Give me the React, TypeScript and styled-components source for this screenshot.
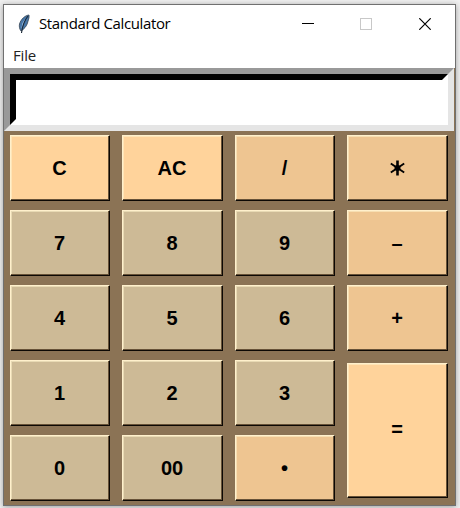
import React from "react";
import styled, { createGlobalStyle } from "styled-components";

const GlobalStyle = createGlobalStyle`
  html, body { margin: 0; padding: 0; }
  body { background: #f0f0f0; overflow: hidden; }
`;

const Desktop = styled.main`
  box-sizing: border-box;
  width: 460px;
  height: 508px;
  padding: 4px 4px 2px 3px;
  background: #f0f0f0;
`;

const Window = styled.section`
  box-sizing: border-box;
  width: 453px;
  height: 502px;
  border: 1px solid #707070;
  background: #8b7355;
  box-shadow: 0 1px 6px rgba(0, 0, 0, 0.35);
  display: flex;
  flex-direction: column;
`;

const TitleBar = styled.header`
  box-sizing: border-box;
  height: 38px;
  flex: none;
  display: flex;
  align-items: center;
  background: #fff;
  padding: 0 1px 0 14px;
`;

const Title = styled.h1`
  margin: 0 auto 0 9px;
  padding-bottom: 2px;
  font: 400 15px/20px "Open Sans", "Noto Sans", sans-serif;
  letter-spacing: -0.37px;
  color: #000;
  white-space: nowrap;
`;

const WindowButton = styled.button<{ $faded?: boolean }>`
  width: 58.5px;
  height: 38px;
  padding: 0;
  border: 0;
  background: none;
  display: flex;
  align-items: center;
  justify-content: center;
  color: ${(p) => (p.$faded ? "#c8c8c8" : "#000")};
`;

const MenuBar = styled.nav`
  height: 25px;
  flex: none;
  background: #fff;
  padding-left: 9px;
  font: 400 15px/25px "Open Sans", "Noto Sans", sans-serif;
  letter-spacing: -0.2px;
  color: #222;
`;

const EntryFrame = styled.div`
  box-sizing: border-box;
  width: 450px;
  height: 63px;
  flex: none;
  border: 6px solid;
  border-color: #999 #e5e5e5 #e5e5e5 #999;
`;

const Entry = styled.div`
  box-sizing: border-box;
  height: 100%;
  border: 6px solid;
  border-color: #000 #fff #fff #000;
  background: #fff;
`;

const Keypad = styled.div`
  display: grid;
  grid-template-columns: 112px 113px 112px 101px;
  grid-template-rows: repeat(5, 66px);
  row-gap: 9px;
  padding: 4px 0 0 6px;
`;

type Tone = "clear" | "operator" | "digit";

const fills: Record<Tone, string> = {
  clear: "#ffd39b",
  operator: "#eec591",
  digit: "#cdba96",
};

const Key = styled.button<{ $tone: Tone; $wide?: boolean; $tall?: boolean }>`
  box-sizing: border-box;
  width: ${(p) => (p.$wide ? "101px" : "100px")};
  display: flex;
  align-items: center;
  justify-content: center;
  grid-row: ${(p) => (p.$tall ? "span 2" : "auto")};
  margin: ${(p) => (p.$tall ? "3px 0" : "0")};
  padding: ${(p) => (p.$tall ? "0 1px 4px 0" : "0 1px 1px 0")};
  border: 1px solid;
  border-color: #fff0cc #0c0804 #0c0804 #fff0cc;
  border-radius: 0;
  background: ${(p) => fills[p.$tone]};
  box-shadow: inset -1px -1px #675238, inset 1px 1px rgba(255, 244, 205, 0.55);
  color: #000;
  font: 700 20px/24px "Liberation Sans", Arial, sans-serif;
`;

const keys: { label: string; tone: Tone; wide?: boolean; tall?: boolean }[] = [
  { label: "C", tone: "clear" },
  { label: "AC", tone: "clear", wide: true },
  { label: "/", tone: "operator" },
  { label: "*", tone: "operator", wide: true },
  { label: "7", tone: "digit" },
  { label: "8", tone: "digit", wide: true },
  { label: "9", tone: "digit" },
  { label: "–", tone: "operator", wide: true },
  { label: "4", tone: "digit" },
  { label: "5", tone: "digit", wide: true },
  { label: "6", tone: "digit" },
  { label: "+", tone: "operator", wide: true },
  { label: "1", tone: "digit" },
  { label: "2", tone: "digit", wide: true },
  { label: "3", tone: "digit" },
  { label: "=", tone: "clear", wide: true, tall: true },
  { label: "0", tone: "digit" },
  { label: "00", tone: "digit", wide: true },
  { label: "•", tone: "operator" },
];

const Feather = () => (
  <svg width="12" height="20" viewBox="0 0 12 20">
    <path d="M11 1C7 1.5 3 5 1.5 10C1 12.500 1.500 15 3 17C6 15 8.500 12.500 9.500 9C10 6.500 11.500 4 11 1Z" fill="#4776a8" stroke="#344352" strokeWidth=".8" />
    <path d="M8 4L5 10L3 16L4.500 9Z" fill="#a8c9e8" />
    <path d="M10 2Q5 8 3.500 19" fill="none" stroke="#182634" strokeWidth="1.100" />
  </svg>
);

const Asterisk = () => (
  <svg width="15" height="16" viewBox="0 0 15 16" role="img" aria-label="*">
    <path d="M7.500 0.500V15.500" stroke="#000" strokeWidth="2.600" />
    <path d="M.8 3.500L14.200 12.500M14.200 3.500L.8 12.500" stroke="#000" strokeWidth="1.900" />
    <circle cx="7.500" cy="8" r="3" />
  </svg>
);

export default function App() {
  return (
    <Desktop>
      <GlobalStyle />
      <Window>
        <TitleBar>
          <Feather />
          <Title>Standard Calculator</Title>
          <WindowButton aria-label="Minimize">
            <svg width="12" height="12" viewBox="0 0 12 12" shapeRendering="crispEdges">
              <path d="M0 5.500H12" stroke="currentColor" />
            </svg>
          </WindowButton>
          <WindowButton $faded aria-label="Maximize">
            <svg width="12" height="12" viewBox="0 0 12 12" shapeRendering="crispEdges">
              <path d="M.5 .5H11.500V11.500H.5Z" fill="none" stroke="currentColor" />
            </svg>
          </WindowButton>
          <WindowButton aria-label="Close">
            <svg width="12" height="12" viewBox="0 0 12 12">
              <path d="M.3 .3L11.700 11.700M11.700 .3L.3 11.700" stroke="currentColor" strokeWidth="1.200" />
            </svg>
          </WindowButton>
        </TitleBar>
        <MenuBar>File</MenuBar>
        <EntryFrame>
          <Entry />
        </EntryFrame>
        <Keypad>
          {keys.map((key) => (
            <Key key={key.label} $tone={key.tone} $wide={key.wide} $tall={key.tall}>
              {key.label === "*" ? <Asterisk /> : key.label}
            </Key>
          ))}
        </Keypad>
      </Window>
    </Desktop>
  );
}
